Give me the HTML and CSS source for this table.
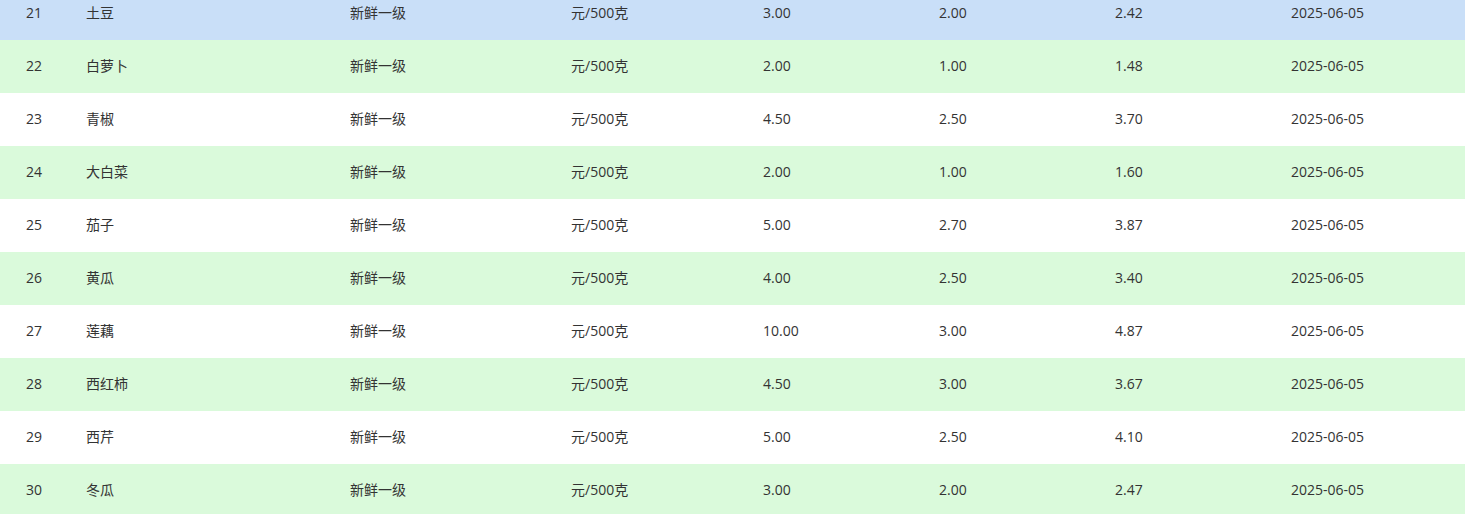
FILE: index.html
```html
<!DOCTYPE html>
<html>
<head>
<meta charset="utf-8">
<link rel="stylesheet" href="styles.css">
</head>
<body>
<div class="table">
  <div class="row current"><span>21</span><span>土豆</span><span>新鲜一级</span><span>元/500克</span><span>3.00</span><span>2.00</span><span>2.42</span><span>2025-06-05</span></div>
  <div class="row stripe"><span>22</span><span>白萝卜</span><span>新鲜一级</span><span>元/500克</span><span>2.00</span><span>1.00</span><span>1.48</span><span>2025-06-05</span></div>
  <div class="row"><span>23</span><span>青椒</span><span>新鲜一级</span><span>元/500克</span><span>4.50</span><span>2.50</span><span>3.70</span><span>2025-06-05</span></div>
  <div class="row stripe"><span>24</span><span>大白菜</span><span>新鲜一级</span><span>元/500克</span><span>2.00</span><span>1.00</span><span>1.60</span><span>2025-06-05</span></div>
  <div class="row"><span>25</span><span>茄子</span><span>新鲜一级</span><span>元/500克</span><span>5.00</span><span>2.70</span><span>3.87</span><span>2025-06-05</span></div>
  <div class="row stripe"><span>26</span><span>黄瓜</span><span>新鲜一级</span><span>元/500克</span><span>4.00</span><span>2.50</span><span>3.40</span><span>2025-06-05</span></div>
  <div class="row"><span>27</span><span>莲藕</span><span>新鲜一级</span><span>元/500克</span><span>10.00</span><span>3.00</span><span>4.87</span><span>2025-06-05</span></div>
  <div class="row stripe"><span>28</span><span>西红柿</span><span>新鲜一级</span><span>元/500克</span><span>4.50</span><span>3.00</span><span>3.67</span><span>2025-06-05</span></div>
  <div class="row"><span>29</span><span>西芹</span><span>新鲜一级</span><span>元/500克</span><span>5.00</span><span>2.50</span><span>4.10</span><span>2025-06-05</span></div>
  <div class="row stripe"><span>30</span><span>冬瓜</span><span>新鲜一级</span><span>元/500克</span><span>3.00</span><span>2.00</span><span>2.47</span><span>2025-06-05</span></div>
</div>
</body>
</html>
```
FILE: styles.css
```css
html, body {
  margin: 0;
  padding: 0;
  background: #ffffff;
  overflow: hidden;
}
.table {
  margin-top: -13px;
  font-family: "Open Sans", "Noto Sans CJK SC", sans-serif;
  font-size: 14px;
  color: #333333;
}
.row {
  box-sizing: border-box;
  display: grid;
  grid-template-columns: 60px 264px 221px 192px 176px 176px 176px 1fr;
  align-items: center;
  height: 53px;
  padding-left: 26px;
  padding-bottom: 2px;
  background: #ffffff;
}
.row span {
  line-height: 20px;
}
.row.stripe {
  background: #dafadb;
}
.row.current {
  background: #c9dff8;
}
```
